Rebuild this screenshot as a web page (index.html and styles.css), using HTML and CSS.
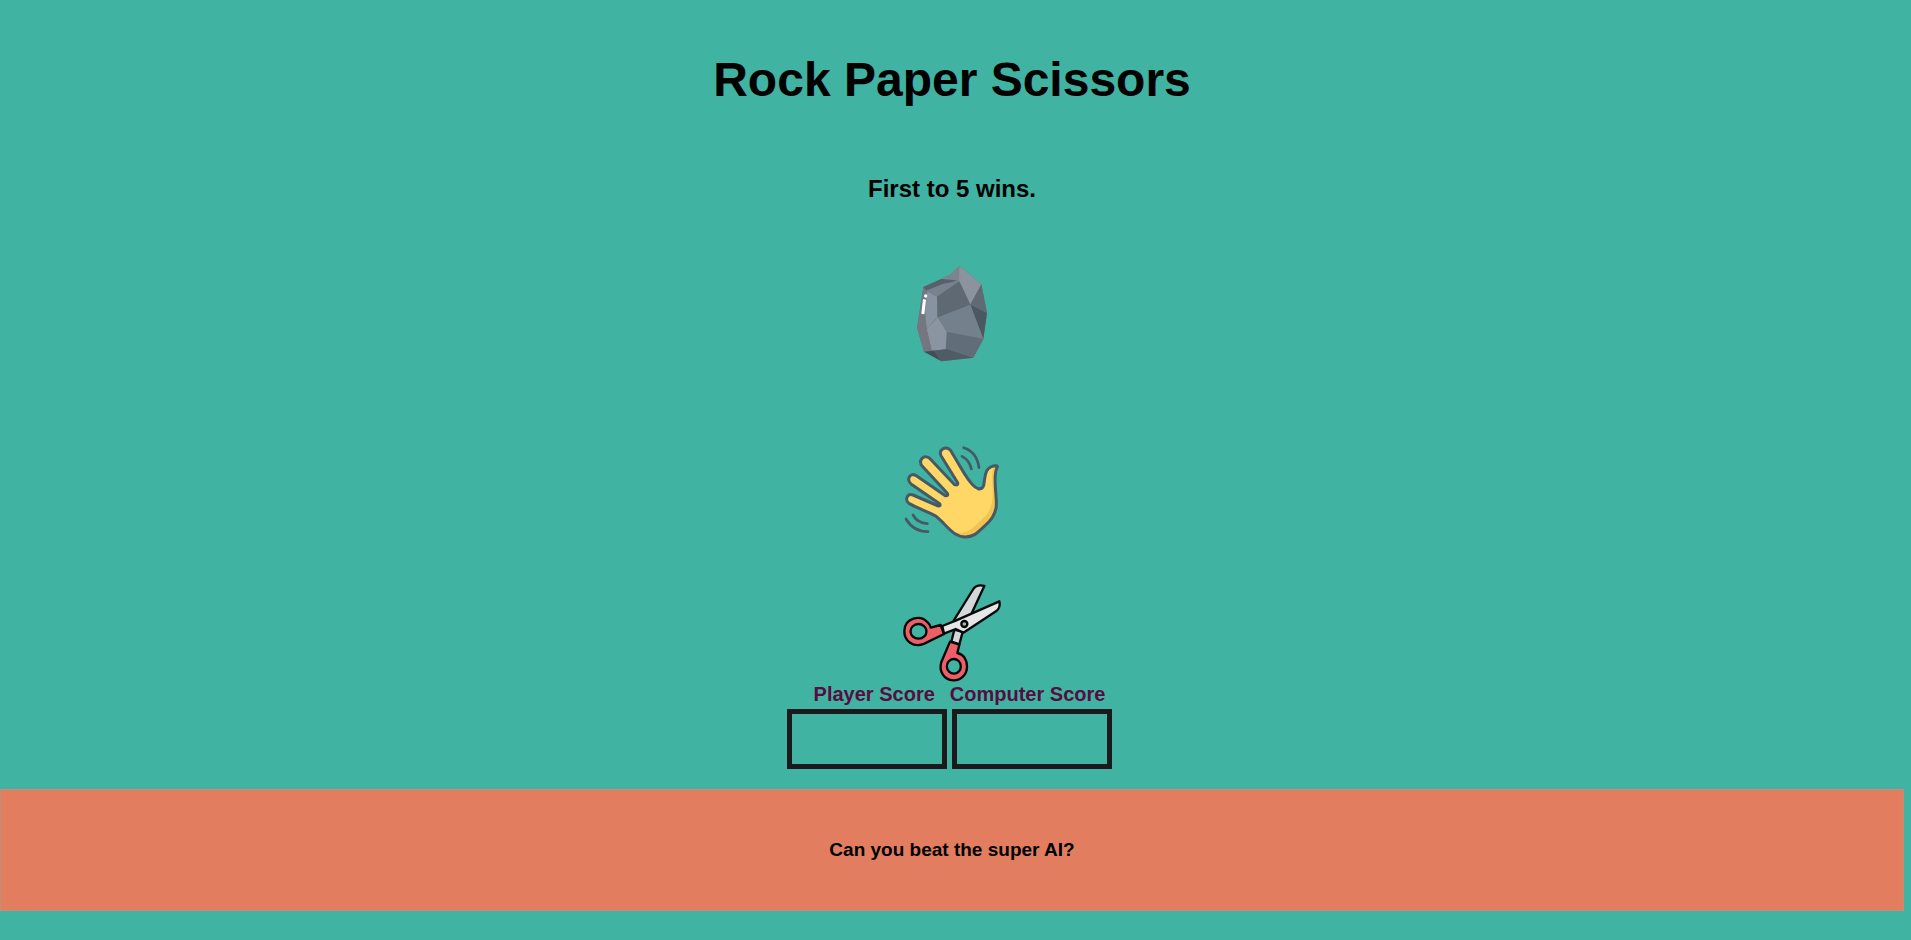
FILE: index.html
```html
<!DOCTYPE html>
<html lang="en">
<head>
<meta charset="utf-8">
<title>Rock Paper Scissors</title>
<link rel="stylesheet" href="styles.css">
</head>
<body>
<main class="game">
  <h1 class="title">Rock Paper Scissors</h1>
  <h2 class="subtitle">First to 5 wins.</h2>
  <div class="choices">
    <button class="choice rock" type="button" aria-label="Rock">
      <svg width="105" height="115" viewBox="0 0 315 345">
        <path fill="#6a737d" d="M179 32L244 88L261 174L250 252L220 308L125 319L72 290L51 219L70 96L124 72L152 58Z"/>
        <path fill="#8b949e" d="M179 32L244 88L211 149L179 81L136 75Z"/>
        <path fill="#7b8590" d="M124 72L152 58L179 32L177 80L150 76Z"/>
        <path fill="#56616b" d="M70 96L124 72L172 76L130 88L78 107Z"/>
        <path fill="#77828e" d="M78 107L130 86L178 79L111 125Z"/>
        <path fill="#5e6973" d="M178 79L211 149L115 187L111 125Z"/>
        <path fill="#606a74" d="M244 88L261 174L211 149Z"/>
        <path fill="#4c5861" d="M211 149L261 174L250 252Z"/>
        <path fill="#74808c" d="M211 149L250 252L140 231L115 187Z"/>
        <path fill="#616d78" d="M140 231L250 252L220 308L138 282Z"/>
        <path fill="#8793a0" d="M78 107L111 125L111 187L80 223L71 170Z"/>
        <path fill="#8a95a1" d="M113 187L140 231L137 284L95 286L80 223Z"/>
        <path fill="#747780" d="M70 98L82 107L75 165L80 223L95 286L72 290L51 219Z"/>
        <path fill="#414e57" d="M72 290L102 287L125 319Z"/>
        <path fill="#505c65" d="M102 287L138 282L220 308L125 319Z"/>
        <path fill="#fff" d="M69 132L78 134L73 178L64 176Z"/>
        <circle fill="#fff" cx="77" cy="123" r="5"/>
      </svg>
    </button>
    <button class="choice paper" type="button" aria-label="Paper">
      <svg width="115" height="110" viewBox="0 0 345 330">
        <path fill="#ffd766" d="M122 243C105 233 68 220 43 206C28 195 36 174 54 180L130 213Q138 213 134 206L48 147C34 134 44 112 62 121L151 182Q161 183 157 175L82 94C68 76 86 58 103 69L179 149Q190 152 188 143L138 62C130 45 151 31 166 45L207 114C223 140 236 157 249 161Q262 164 266 151C271 128 267 92 304 92Q309 94 306 98C293 123 305 173 304 210C303 235 291 254 270 272C246 294 236 306 211 306C172 306 152 265 122 243Z"/>
        <path fill="#f2c351" d="M294 99C287 135 300 178 288 214C279 241 263 250 249 264C228 285 214 294 184 294C217 319 246 291 270 272C291 254 303 235 304 210C305 173 293 123 306 94Z"/>
        <path fill="none" stroke="#455a64" stroke-width="9" stroke-linecap="round" stroke-linejoin="round" d="M122 243C105 233 68 220 43 206C28 195 36 174 54 180L130 213Q138 213 134 206L48 147C34 134 44 112 62 121L151 182Q161 183 157 175L82 94C68 76 86 58 103 69L179 149Q190 152 188 143L138 62C130 45 151 31 166 45L207 114C223 140 236 157 249 161Q262 164 266 151C271 128 267 92 304 92Q309 94 306 98C293 123 305 173 304 210C303 235 291 254 270 272C246 294 236 306 211 306C172 306 152 265 122 243Z"/>
        <path fill="none" stroke="#455a64" stroke-width="8" stroke-linecap="round" d="M206 38Q246 51 252 98M201 64Q224 76 229 102M54 240Q67 264 97 266M33 252Q55 290 99 290"/>
      </svg>
    </button>
    <button class="choice scissors" type="button" aria-label="Scissors">
      <svg width="115" height="107" viewBox="0 0 345 321">
        <g stroke="#050808" stroke-width="7" stroke-linejoin="round">
          <path fill="#d5d8da" d="M176 137L235 42Q246 27 268 33L229 117L196 151Z"/>
          <path fill="#d5d8da" d="M178 164L203 171L193 208L169 200Z"/>
          <path fill="#e4e6e8" d="M142 153L182 137L313 79Q318 97 303 109L205 173L182 162L147 176Z"/>
          <path fill="#ed5f66" fill-rule="evenodd" d="M107 158L137 150L147 177L88 206C55 220 27 197 28 168C29 129 76 117 99 143Q106 150 107 158ZM70 147A24 22 0 1 0 71 191A24 22 0 1 0 70 147Z"/>
          <path fill="#ed5f66" fill-rule="evenodd" d="M165 200L193 209L187 234C207 238 216 256 216 275C216 299 197 317 175 316C145 315 131 286 139 261ZM176 252A21 22 0 1 0 177 296A21 22 0 1 0 176 252Z"/>
          <circle fill="#aeb2b5" cx="208" cy="147" r="9"/>
        </g>
      </svg>
    </button>
  </div>
  <section class="scores" aria-label="Scores">
    <div class="labels">
      <label for="player-score">Player Score</label>
      <label for="computer-score">Computer Score</label>
    </div>
    <div class="boxes">
      <output class="score" id="player-score"></output>
      <output class="score" id="computer-score"></output>
    </div>
  </section>
  <p class="message">Can you beat the super AI?</p>
</main>
</body>
</html>
```
FILE: styles.css
```css
body {
  margin: 0;
  background: #41b3a3;
  color: #000;
  font-family: "Liberation Sans", Arial, sans-serif;
  font-weight: bold;
}

.game {
  margin-right: 7px;
  padding-top: 52px;
  text-align: center;
}

.title {
  margin: 0;
  font-size: 48px;
  line-height: 55px;
}

.subtitle {
  margin: 68px 0 53px;
  font-size: 24px;
  line-height: 27px;
}

.choices {
  display: flex;
  flex-direction: column;
  align-items: center;
}

.choice {
  padding: 0;
  border: 0;
  background: none;
  cursor: pointer;
}

.choice svg {
  display: block;
}

.paper {
  margin: 65px 0 30px;
}

.labels {
  display: flex;
  justify-content: center;
  gap: 15px;
  padding: 1px 0 3px 15px;
  color: #560d40;
  font-size: 20px;
  line-height: 23px;
}

.boxes {
  display: flex;
  justify-content: center;
  gap: 5px;
  padding-right: 5px;
}

.score {
  box-sizing: border-box;
  width: 160px;
  height: 60px;
  border: 5px solid #1a1a1d;
  font-size: 32px;
  line-height: 50px;
}

.message {
  margin: 20px 0 0;
  padding: 49px 0;
  border: 1px solid #b8937c;
  background: #e27d60;
  font-size: 19px;
  line-height: 22px;
}
```
